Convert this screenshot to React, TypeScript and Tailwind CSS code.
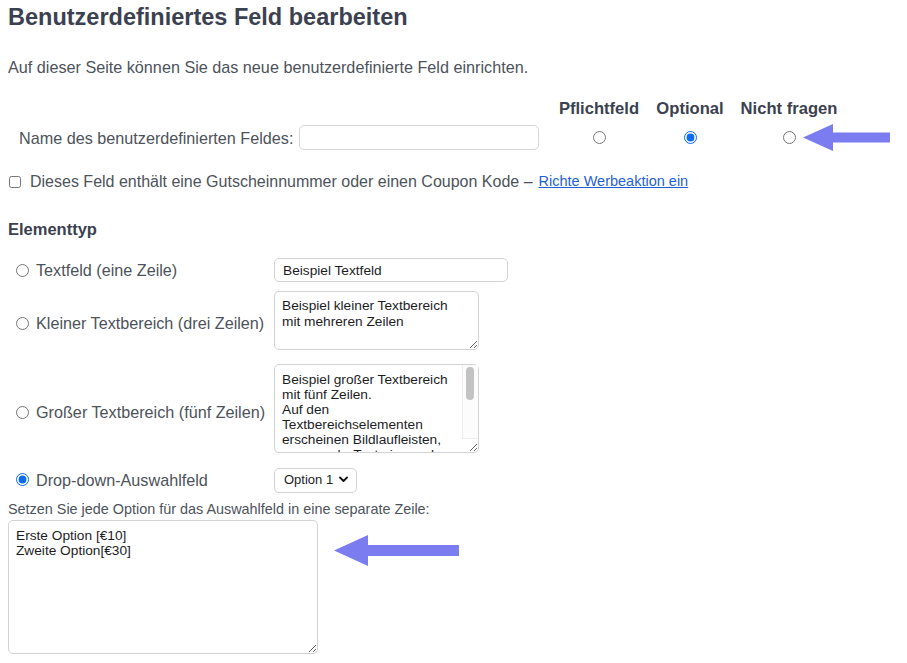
import { useState } from 'react';

const textDark = 'text-[#3b4150]';
const textBody = 'text-[#4d535b]';

function Arrow({ className, width, height }: { className: string; width: number; height: number }) {
  // simple annotation arrow pointing left
  const head = Math.round(height * 1.1);
  const shaft = Math.round(height * 0.36);
  const top = (height - shaft) / 2;
  return (
    <svg className={className} width={width} height={height} viewBox={`0 0 ${width} ${height}`}>
      <polygon
        fill="#7b7cf0"
        points={`0,${height / 2} ${head},0 ${head},${top} ${width},${top} ${width},${top + shaft} ${head},${top + shaft} ${head},${height}`}
      />
    </svg>
  );
}

export default function App() {
  const [required, setRequired] = useState('optional');
  const [elementType, setElementType] = useState('dropdown');

  const rows = [
    { id: 'text', label: 'Textfeld (eine Zeile)', mt: 'mt-[19px]', pt: '' },
    { id: 'small', label: 'Kleiner Textbereich (drei Zeilen)', mt: 'mt-[9px]', pt: 'pt-[5px]' },
    { id: 'large', label: 'Großer Textbereich (fünf Zeilen)', mt: 'mt-[14px]', pt: 'pt-[7px]' },
    { id: 'dropdown', label: 'Drop-down-Auswahlfeld', mt: 'mt-[14px]', pt: '' },
  ];

  const control = (id: string) => {
    if (id === 'text') {
      return (
        <input
          defaultValue="Beispiel Textfeld"
          className="w-[234px] h-[24px] rounded-[5px] border border-[#d3d3d3] px-[8px] text-[13.7px] text-[#1d1d1f] outline-none"
        />
      );
    }
    if (id === 'small') {
      return (
        <textarea
          defaultValue={'Beispiel kleiner Textbereich\nmit mehreren Zeilen'}
          className="block w-[205px] h-[59px] rounded-[5px] border border-[#d3d3d3] px-[7px] py-[6px] text-[13.7px] leading-[15.5px] text-[#1d1d1f] outline-none"
        />
      );
    }
    if (id === 'large') {
      return (
        <div className="relative w-[205px] h-[89px]">
          <textarea
            defaultValue={
              'Beispiel großer Textbereich\nmit fünf Zeilen.\nAuf den Textbereichselementen erscheinen Bildlaufleisten, wenn mehr Text eingegeben wird, als in den Bereich passt.'
            }
            className="block w-full h-full overflow-hidden rounded-[5px] border border-[#d3d3d3] pl-[7px] pr-[18px] py-[7px] text-[13.7px] leading-[15px] text-[#1d1d1f] outline-none"
          />
          {/* scrollbar */}
          <div className="pointer-events-none absolute right-[1px] top-[1px] bottom-[14px] w-[16px] border-l border-b border-[#eeeeee] bg-[#fcfcfc]" />
          <div className="pointer-events-none absolute right-[5px] top-[3px] w-[8px] h-[33px] rounded-full bg-[#c3c3c3]" />
        </div>
      );
    }
    return (
      <div className="relative w-[83px] h-[25px]">
        <select className="appearance-none w-full h-full rounded-[5px] border border-[#d3d3d3] bg-white pl-[9px] text-[13px] text-[#1d1d1f] outline-none">
          <option>Option 1</option>
        </select>
        <svg
          className="pointer-events-none absolute right-[9px] top-[9px]"
          width="9"
          height="7"
          viewBox="0 0 9 7"
        >
          <path d="M1 1.5 L4.5 5 L8 1.5" fill="none" stroke="#111" strokeWidth="1.8" strokeLinecap="round" strokeLinejoin="round" />
        </svg>
      </div>
    );
  };

  return (
    <div className="relative w-[907px] h-[663px] overflow-hidden bg-white px-2 font-['Liberation_Sans',Arial,sans-serif]">
      {/* Title */}
      <h1 className={`pt-[4px] text-[23.5px] leading-[26px] font-bold ${textDark}`}>Benutzerdefiniertes Feld bearbeiten</h1>

      <p className={`mt-[27px] text-[16.2px] leading-[20px] ${textBody}`}>
        Auf dieser Seite können Sie das neue benutzerdefinierte Feld einrichten.
      </p>

      {/* Name + required options */}
      <div className="mt-[22px] grid grid-cols-[291px_250px_100px_82px_116px] items-center">
        <div />
        <div />
        <div className={`text-center text-[16.6px] leading-[20px] font-bold ${textDark}`}>Pflichtfeld</div>
        <div className={`text-center text-[16.6px] leading-[20px] font-bold ${textDark}`}>Optional</div>
        <div className={`text-center text-[16.6px] leading-[20px] font-bold ${textDark}`}>Nicht fragen</div>

        <label className={`mt-[6px] pl-[11px] whitespace-nowrap text-[16.2px] leading-[20px] ${textBody}`}>
          Name des benutzerdefinierten Feldes:
        </label>
        <input className="mt-[6px] w-[240px] h-[25px] rounded-[5px] border border-[#d6d6d6] px-2 text-[13.7px] outline-none" />
        {['required', 'optional', 'skip'].map((v) => (
          <div key={v} className="mt-[6px] flex justify-center">
            <input
              type="radio"
              name="req"
              checked={required === v}
              onChange={() => setRequired(v)}
              className="m-0 w-[13px] h-[13px] accent-[#0a6cf5]"
            />
          </div>
        ))}
      </div>

      {/* Coupon checkbox */}
      <div className={`mt-[22px] flex items-center h-[20px] whitespace-nowrap text-[16px] ${textBody}`}>
        <input type="checkbox" className="m-0 ml-[1px] w-[12px] h-[12px]" />
        <span className="ml-[9px]">Dieses Feld enthält eine Gutscheinnummer oder einen Coupon Kode –</span>
        <a href="#" className="ml-[6px] text-[14.5px] text-[#1f5fd6] underline">
          Richte Werbeaktion ein
        </a>
      </div>

      {/* Element type */}
      <h2 className={`mt-[27px] text-[16.5px] leading-[20px] font-bold ${textDark}`}>Elementtyp</h2>

      {rows.map((r) => (
        <div key={r.id} className={`${r.mt} flex items-center`}>
          <label className={`w-[266px] ${r.pt} flex items-center pl-[8px] whitespace-nowrap text-[16.2px] ${textBody}`}>
            <input
              type="radio"
              name="etype"
              checked={elementType === r.id}
              onChange={() => setElementType(r.id)}
              className="m-0 w-[13px] h-[13px] accent-[#0a6cf5]"
            />
            <span className="ml-[7px]">{r.label}</span>
          </label>
          {control(r.id)}
        </div>
      ))}

      <p className={`mt-[8px] text-[14.4px] leading-[18px] ${textBody}`}>
        Setzen Sie jede Option für das Auswahlfeld in eine separate Zeile:
      </p>
      <textarea
        defaultValue={'Erste Option [€10]\nZweite Option[€30]'}
        className="mt-[2px] block w-[310px] h-[134px] rounded-[5px] border border-[#d3d3d3] px-[7px] py-[7px] text-[13.7px] leading-[15px] text-[#1d1d1f] outline-none"
      />

      {/* Annotation arrows */}
      <Arrow className="absolute left-[803px] top-[124px]" width={87} height={27} />
      <Arrow className="absolute left-[334px] top-[535px]" width={125} height={31} />
    </div>
  );
}
